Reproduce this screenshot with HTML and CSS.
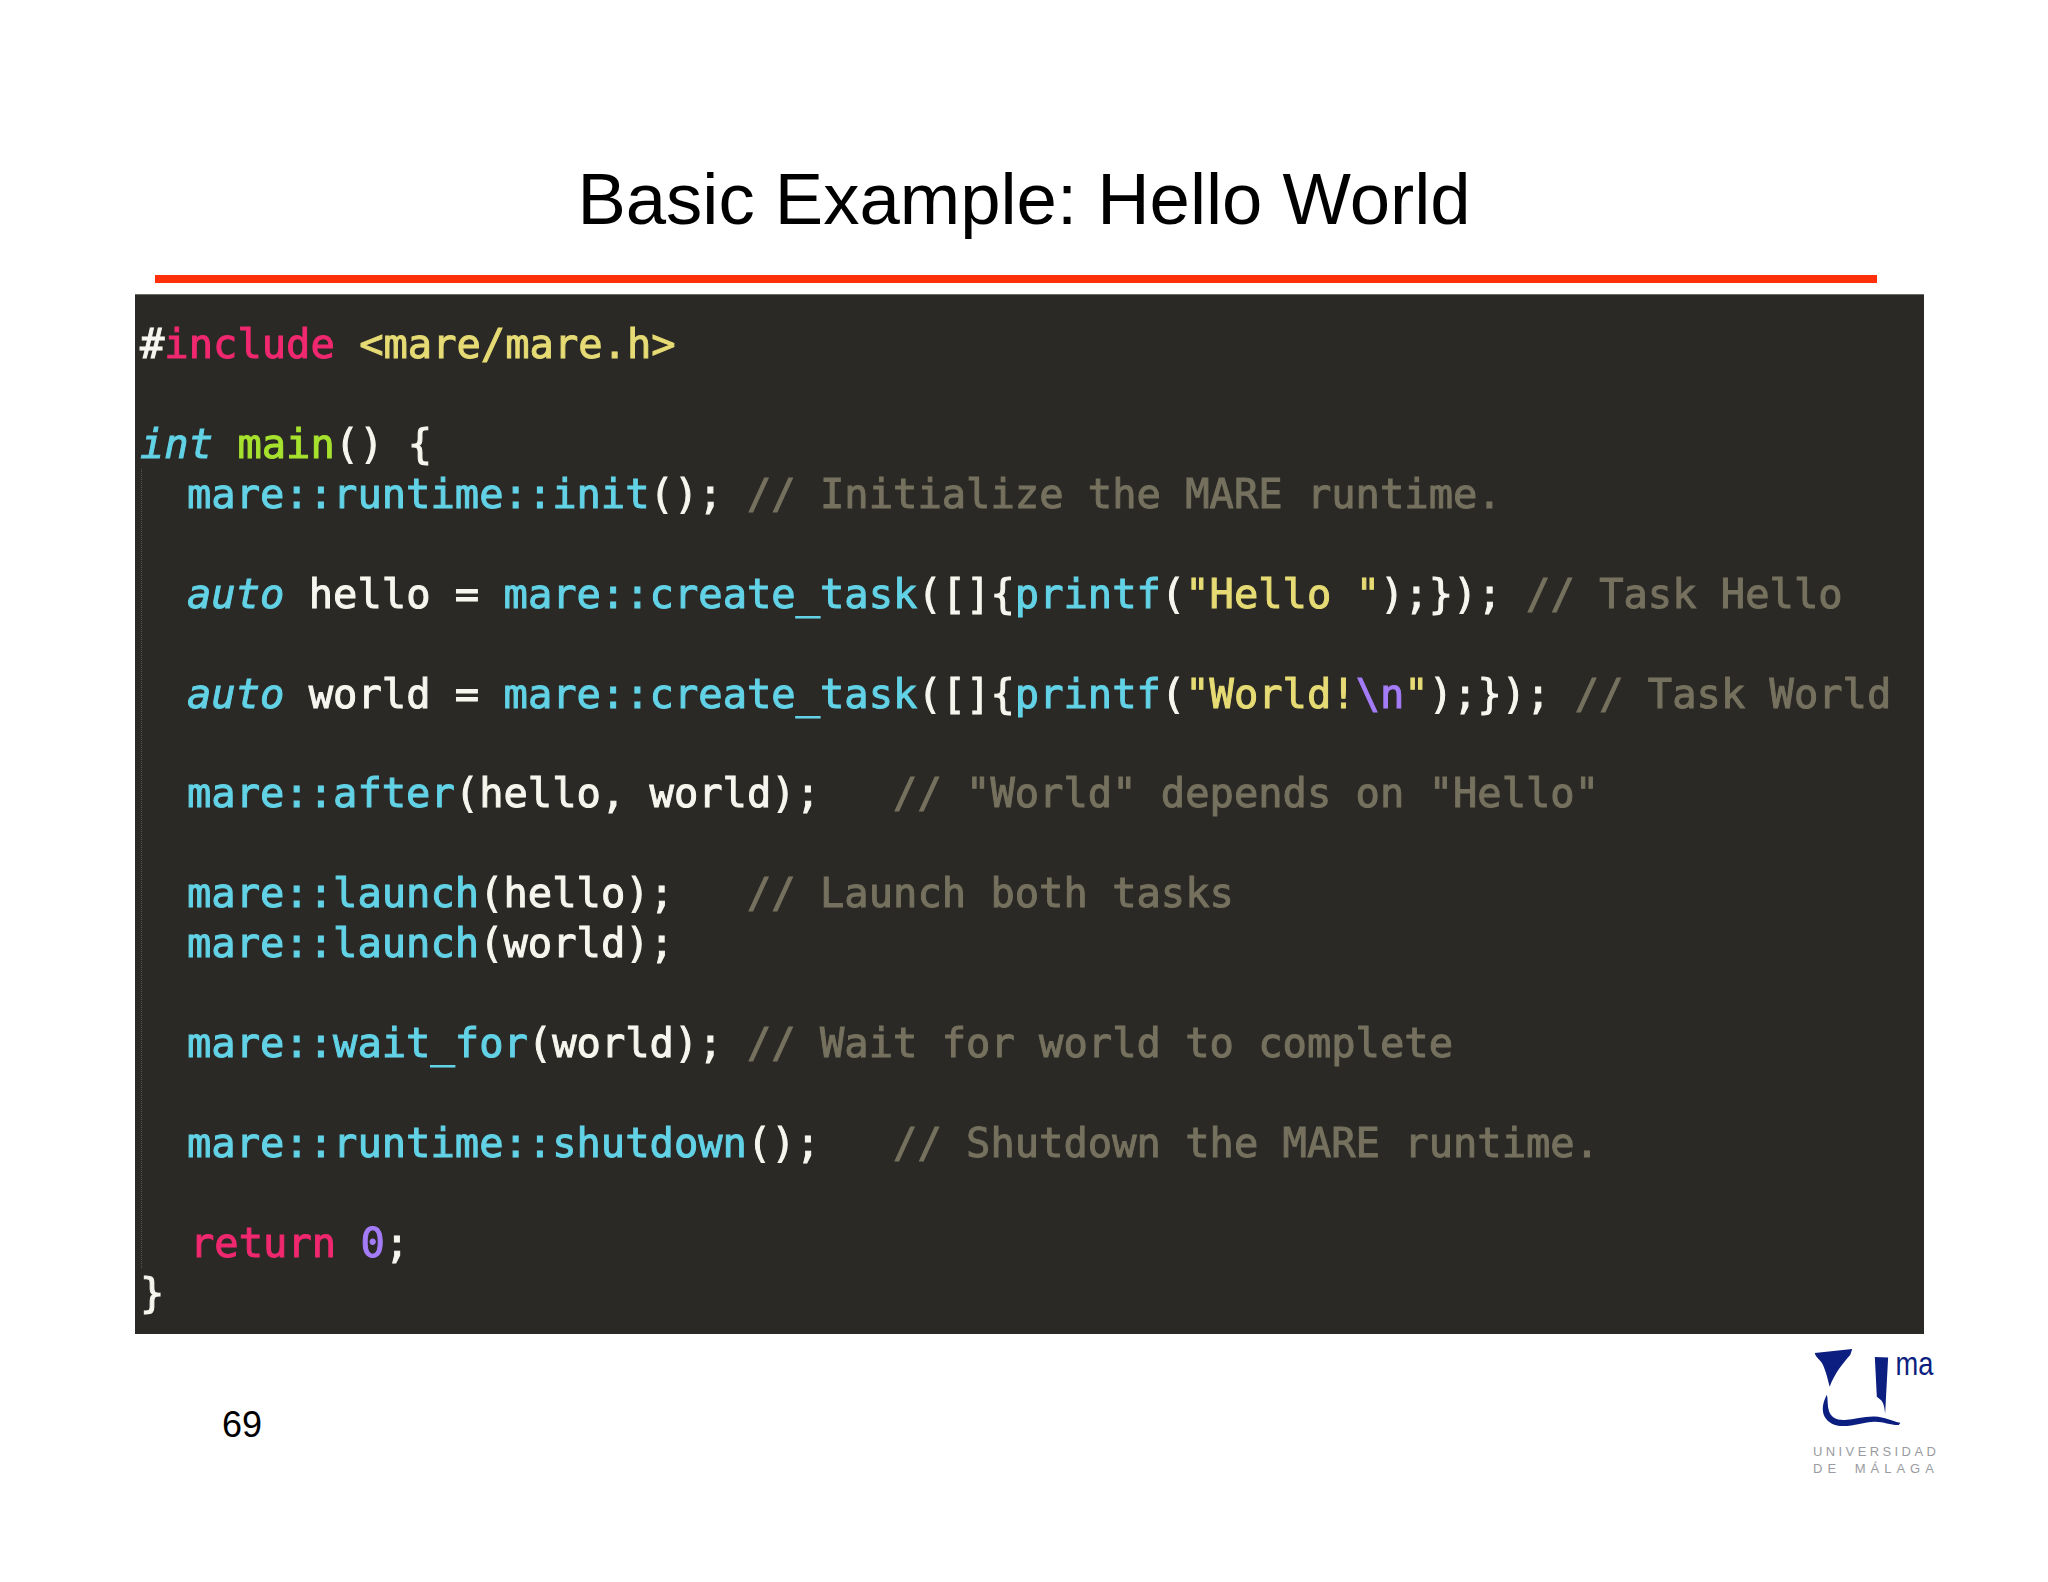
FILE: index.html
```html
<!DOCTYPE html>
<html lang="en">
<head>
<meta charset="utf-8">
<title>Basic Example: Hello World</title>
<link rel="stylesheet" href="styles.css">
</head>
<body>
<main class="slide">
  <h1 class="title">Basic Example: Hello World</h1>
  <div class="rule"></div>
  <div class="code">
    <div class="line"><span class="w">#</span><span class="k">include</span> <span class="s">&lt;mare/mare.h&gt;</span></div>
    <div class="line"></div>
    <div class="line"><span class="t i">int</span> <span class="g">main</span><span class="w">() {</span></div>
    <div class="body">
      <div class="line"><span class="t">mare::runtime::init</span><span class="w">();</span> <span class="c">// Initialize the MARE runtime.</span></div>
      <div class="line"></div>
      <div class="line"><span class="t i">auto</span> <span class="w">hello =</span> <span class="t">mare::create_task</span><span class="w">([]{</span><span class="t">printf</span><span class="w">(</span><span class="s">"Hello "</span><span class="w">);});</span> <span class="c">// Task Hello</span></div>
      <div class="line"></div>
      <div class="line"><span class="t i">auto</span> <span class="w">world =</span> <span class="t">mare::create_task</span><span class="w">([]{</span><span class="t">printf</span><span class="w">(</span><span class="s">"World!</span><span class="n">\n</span><span class="s">"</span><span class="w">);});</span> <span class="c">// Task World</span></div>
      <div class="line"></div>
      <div class="line"><span class="t">mare::after</span><span class="w">(hello, world);</span>   <span class="c">// "World" depends on "Hello"</span></div>
      <div class="line"></div>
      <div class="line"><span class="t">mare::launch</span><span class="w">(hello);</span>   <span class="c">// Launch both tasks</span></div>
      <div class="line"><span class="t">mare::launch</span><span class="w">(world);</span></div>
      <div class="line"></div>
      <div class="line"><span class="t">mare::wait_for</span><span class="w">(world);</span> <span class="c">// Wait for world to complete</span></div>
      <div class="line"></div>
      <div class="line"><span class="t">mare::runtime::shutdown</span><span class="w">();</span>   <span class="c">// Shutdown the MARE runtime.</span></div>
      <div class="line"></div>
      <div class="line return"><span class="k">return</span> <span class="n">0</span><span class="w">;</span></div>
    </div>
    <div class="line"><span class="w">}</span></div>
  </div>
  <footer class="footer">
    <div class="page">69</div>
    <div class="logo">
      <svg class="mark" viewBox="100 80 370 245" role="img" aria-label="UMA">
        <path class="ink" d="M105 100 L218 88 L212 106 C195 125 165 160 150 202 C143 170 135 145 127 130 C118 118 108 112 105 100Z"/>
        <path class="ink" d="M286 112 L326 114 L317 282 C315 262 312 250 305 242 L292 232Z"/>
        <path class="ink" d="M142 226 C128 250 126 275 135 292 C145 310 165 320 190 320 C225 320 255 308 285 307 C310 306 335 318 358 317 L363 310 C340 306 315 292 285 291 C255 290 225 300 195 302 C170 303 155 295 148 275 C143 260 145 240 142 226Z"/>
        <text class="ma" x="348" y="165" textLength="114" lengthAdjust="spacingAndGlyphs">ma</text>
      </svg>
      <div class="uni">UNIVERSIDAD</div>
      <div class="uni wide">DE MÁLAGA</div>
    </div>
  </footer>
</main>
</body>
</html>
```
FILE: styles.css
```css
html, body {
  margin: 0;
  background: #ffffff;
}
.slide {
  width: 2048px;
  height: 1582px;
  overflow: hidden;
  font-family: "Liberation Sans", Arial, sans-serif;
  color: #000;
}
.title {
  margin: 0;
  padding-top: 158px;
  height: 117px;
  box-sizing: content-box;
  text-align: center;
  font-size: 72.5px;
  font-weight: 400;
  line-height: 82px;
}
.rule {
  width: 1722px;
  height: 8px;
  margin-left: 155px;
  background: #ff3008;
}
.code {
  width: 1784px;
  height: 1015px;
  margin: 11px 0 0 135px;
  padding: 24px 0 0 5px;
  background: #2a2925;
  border-top: 1px solid #6a6a66;
  font-family: "DejaVu Sans Mono", monospace;
  font-size: 40.45px;
  line-height: 50px;
  box-sizing: content-box;
}
.line {
  height: 49.95px;
  white-space: pre;
  filter: blur(0.7px);
  -webkit-text-stroke: 1px currentColor;
}
.body {
  margin-left: 1px;
  padding-left: 45px;
  border-left: 1px dotted #55544e;
}
.return { padding-left: 3px; }
.w { color: #f6f6ee; }
.k { color: #f0286f; }
.t { color: #62d2e6; }
.i { font-style: italic; }
.g { color: #a6e22e; }
.s { color: #e6db74; }
.n { color: #a57cf8; }
.c { color: #75715e; }
.footer {
  display: flex;
  justify-content: space-between;
  align-items: flex-start;
  padding: 12px 111px 0 222px;
}
.page {
  margin-top: 57px;
  font-size: 36px;
  line-height: 44px;
}
.logo {
  width: 124px;
}
.mark {
  display: block;
  width: 123px;
  height: 82px;
  overflow: visible;
}
.ink { fill: #0c1f80; }
.ma {
  fill: #0c1f80;
  font-size: 100px;
  font-family: "Liberation Sans", Arial, sans-serif;
}
.uni {
  font-size: 13px;
  line-height: 17px;
  color: #9a9ba0;
  white-space: nowrap;
  letter-spacing: 3.4px;
}
.uni:first-of-type { margin-top: 15px; }
.wide {
  letter-spacing: 5px;
  word-spacing: 5px;
}
```
